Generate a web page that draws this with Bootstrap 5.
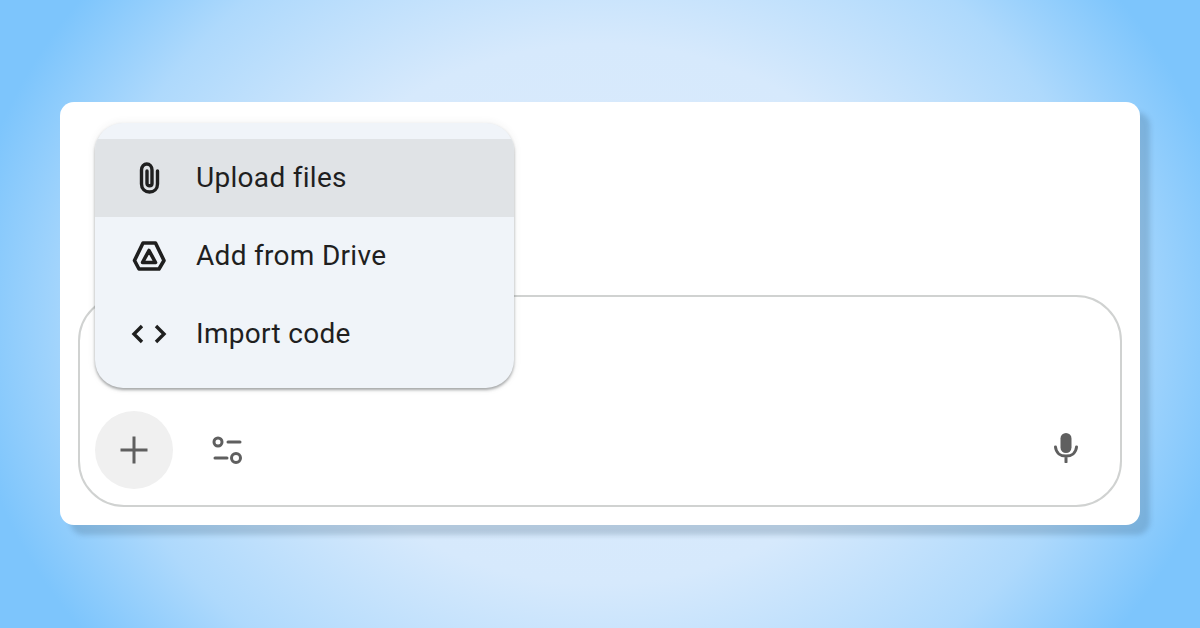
<!DOCTYPE html>
<html lang="en">
<head>
<meta charset="utf-8">
<title>Upload menu</title>
<link href="https://cdn.jsdelivr.net/npm/bootstrap@5.3.0/dist/css/bootstrap.min.css" rel="stylesheet">
<style>
html,body{height:628px;overflow:hidden}
body{background:radial-gradient(ellipse 640px 540px at 600px 314px,#dcebfd 0%,#d6e9fc 50%,#aed9fc 80%,#7dc5fc 100%);background-color:#7dc5fc;padding:102px 60px 103px;font-family:"Roboto","Liberation Sans",sans-serif}
.sheet{height:423px;background:#fff;border-radius:14px;box-shadow:10px 10px 5px rgba(50,80,110,.22);padding:193px 18px 18px}
.composer{height:212px;border:2px solid #d0d2d1;border-radius:46px;padding:0 42px 16px 15px}
.round-add{width:78px;height:78px;border-radius:50%;background:#f0f0f0;border:0;padding:0;margin-right:38px}
.plain-btn{background:none;border:0;padding:0;line-height:0}
.pop{left:35px;top:21px;width:419px;height:265px;background:#f0f4f9;border-radius:28px;box-shadow:0 2px 3px rgba(60,64,67,.45),0 0 8px rgba(60,64,67,.08);padding:16px 0 0;overflow:hidden}
.pop-item{height:78px;padding-left:36px;font-size:28px;color:#1f1f1f;letter-spacing:.3px}
.pop-item.on{background:#e0e3e6}
.pop-ico{width:36px;margin-right:29px;line-height:0}
</style>
</head>
<body>
<div class="sheet position-relative">
  <div class="composer d-flex align-items-end">
    <div class="d-flex align-items-center w-100">
      <button class="round-add d-flex align-items-center justify-content-center" aria-label="Add">
        <svg width="30" height="30" viewBox="0 0 30 30"><path d="M15 1.500V28.500M1.500 15H28.500" stroke="#5f5f5f" stroke-width="3" fill="none"/></svg>
      </button>
      <button class="plain-btn me-auto" aria-label="Tools">
        <svg width="32" height="30" viewBox="0 0 32 30" fill="none" stroke="#5f5f5f" stroke-width="3"><circle cx="7" cy="7" r="4"/><path d="M17 7H29M4 23H16" stroke-linecap="round"/><circle cx="25" cy="23" r="4.500"/></svg>
      </button>
      <button class="plain-btn mb-1" aria-label="Voice">
        <svg width="24" height="30" viewBox="0 0 24 30"><rect x="6.500" y="0" width="11" height="20" rx="5.500" fill="#5f5f5f"/><path d="M1.500 14C2 20 6.500 23 12 23S22 20 22.500 14M12 23V29" fill="none" stroke="#5f5f5f" stroke-width="3" stroke-linecap="round"/></svg>
      </button>
    </div>
  </div>
  <div class="pop position-absolute">
    <div class="pop-item on d-flex align-items-center">
      <span class="pop-ico"><svg width="36" height="32" viewBox="0 0 36 32" fill="none" stroke="#1f1f1f" stroke-width="3.400" stroke-linecap="round"><path d="M26.500 9V22C26.500 27 23 30 18.500 30S10.500 27 10.500 22V8C10.500 4.500 13 2 15.750 2S21 4.500 21 8V21.500C21 24.500 16 24.500 16 21.500V9"/></svg></span>Upload files
    </div>
    <div class="pop-item d-flex align-items-center">
      <span class="pop-ico"><svg width="36" height="30" viewBox="0 0 36 30" fill="none" stroke="#1f1f1f" stroke-width="3.600" stroke-linejoin="round"><path d="M12 2H24.500L33 19.500L28 28H8L3.500 19.500Z"/><path d="M18 9.500L24.500 21.500H11.500Z"/></svg></span>Add from Drive
    </div>
    <div class="pop-item d-flex align-items-center">
      <span class="pop-ico"><svg width="36" height="22" viewBox="0 0 36 22" fill="none" stroke="#1f1f1f" stroke-width="3.400"><path d="M11 3L3 11L11 19M25 3L33 11L25 19"/></svg></span>Import code
    </div>
  </div>
</div>
<script src="https://cdn.jsdelivr.net/npm/bootstrap@5.3.0/dist/js/bootstrap.bundle.min.js"></script>
</body>
</html>
